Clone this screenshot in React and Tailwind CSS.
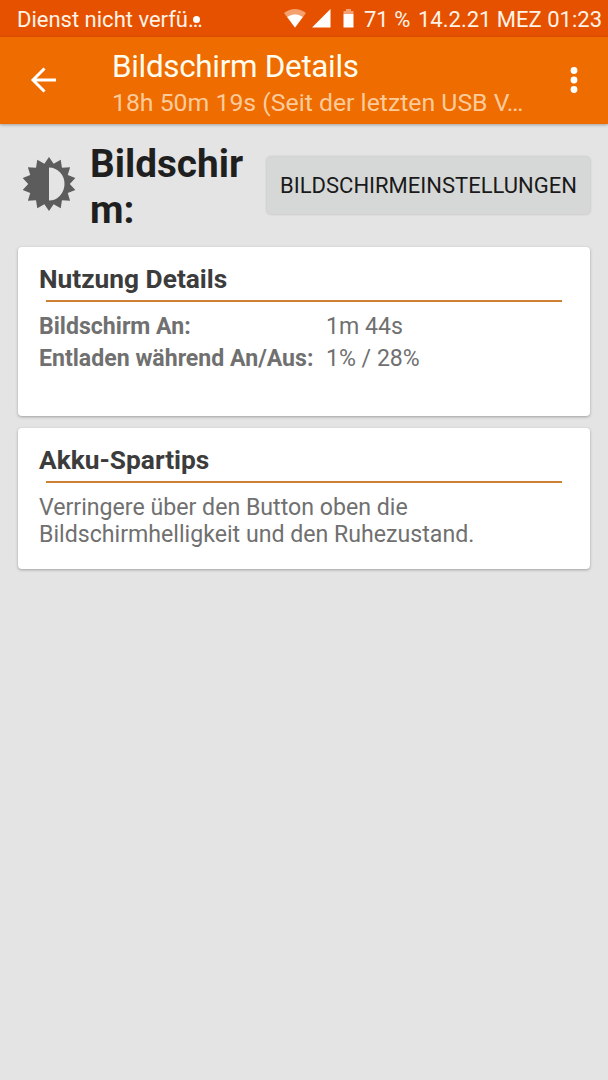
import React from 'react';

const rows = [
  { label: 'Bildschirm An:', value: '1m 44s' },
  { label: 'Entladen während An/Aus:', value: '1% / 28%' },
];

// 14-pointed star around 0,0
const star = Array.from({ length: 28 }, (_, i) => {
  const r = i % 2 ? 20.8 : 27;
  const a = (i * Math.PI) / 14;
  return `${(r * Math.sin(a)).toFixed(2)},${(-r * Math.cos(a)).toFixed(2)}`;
}).join(' L');

function BrightnessIcon() {
  return (
    <svg className="w-[54px] h-[54px] mb-[4px] shrink-0" viewBox="-27 -27 54 54">
      <path d={`M${star} Z M0,-16.5 V16.5 A15.5,16.5 0 0 0 0,-16.5 Z`} fill="#5c5c5c" fillRule="evenodd" />
    </svg>
  );
}

function StatusBar() {
  return (
    <div className="h-[37px] bg-[#e65100] flex items-center pl-[17px] pr-[6px] text-[22px] text-[#fff3e8] whitespace-nowrap">
      <div className="relative w-[267px] pt-[2px]">
        Dienst nicht verfü…
        <span className="absolute left-[176px] top-[15px] w-[7px] h-[7px] rounded-full bg-white" />
      </div>
      <svg className="w-[22px] h-[19px] shrink-0" viewBox="0 0 22 19">
        <path d="M0 4 Q11 -4 22 4 L11 18.5 Z" fill="#f5a06f" />
        <path d="M3.2 8 Q11 2.5 18.8 8 L11 18.5 Z" fill="#fff" />
      </svg>
      <svg className="w-[19px] h-[19px] ml-[6px] shrink-0" viewBox="0 0 19 19">
        <path d="M0 18.5 L18.5 0 V18.5 Z" fill="#fff" />
      </svg>
      <svg className="w-[11px] h-[19px] ml-[12px] shrink-0" viewBox="0 0 11 19">
        <path d="M3 0 H8 V2 H10.5 V5 H0.5 V2 H3 Z" fill="#f5a06f" />
        <path d="M0.5 5 H10.5 V18.5 H0.5 Z" fill="#fff" />
      </svg>
      <span className="ml-[10px] pt-[2px]">71 %</span>
      <span className="ml-auto pt-[2px]">14.2.21 MEZ 01:23</span>
    </div>
  );
}

function AppBar() {
  return (
    <header className="h-[87px] bg-[#ef6c00] flex items-center shadow-[0_1px_3px_rgba(0,0,0,0.3)]">
      <svg className="w-[26px] h-[26px] ml-[30px] mb-px shrink-0" viewBox="0 0 26 26" fill="none" stroke="#fff" strokeWidth="3">
        <path d="M26 13 H3 M14.5 1.5 L3 13 L14.5 24.5" />
      </svg>
      <div className="ml-[56px] w-[420px] pt-[5px] whitespace-nowrap">
        <h1 className="text-[31.4px] leading-[38px] tracking-[-0.3px] text-[#fffdf0]">Bildschirm Details</h1>
        <p className="text-[24.8px] leading-[33px] text-[#fbcb9c]">18h 50m 19s (Seit der letzten USB V…</p>
      </div>
      <svg className="w-[8px] h-[26px] ml-[37.5px] mb-px shrink-0" viewBox="0 0 8 26" fill="#fff">
        <circle cx="4" cy="3.5" r="3.4" />
        <circle cx="4" cy="13" r="3.4" />
        <circle cx="4" cy="22.5" r="3.4" />
      </svg>
    </header>
  );
}

function Card({ title, className, children }) {
  return (
    <section className={`bg-white rounded-[4px] shadow-[0_1px_3px_rgba(0,0,0,0.3)] px-[21px] pt-[16px] text-[#707070] ${className}`}>
      <h2 className="text-[26.3px] leading-[32px] font-bold text-[#3c3c3c]">{title}</h2>
      <div className="h-[2px] bg-[#cd8032] mt-[5px] ml-[7px] mr-[7px]" />
      {children}
    </section>
  );
}

export default function App() {
  return (
    <div className="w-[608px] h-[1080px] bg-[#e4e4e4] font-[Roboto,sans-serif] overflow-hidden">
      <StatusBar />
      <AppBar />
      <main className="px-[18px]">
        <div className="h-[123px] flex items-center pl-[4px]">
          <BrightnessIcon />
          <div className="ml-[14px] w-[160px] pt-[2px] text-[38.7px] leading-[46px] font-bold text-[#1f1f1f] break-all">Bildschirm:</div>
          <button className="ml-auto w-[323px] h-[57px] mb-[1px] rounded-[4px] bg-[#d6d8d7] shadow-[0_0_3px_rgba(0,0,0,0.2)] text-[22px] text-[#1a1a1a] whitespace-nowrap">BILDSCHIRMEINSTELLUNGEN</button>
        </div>
        <Card title="Nutzung Details" className="h-[169px]">
          <div className="grid grid-cols-[287px_1fr] mt-[9px] text-[23.1px] leading-[31.5px]">
            {rows.map((r) => (
              <React.Fragment key={r.label}>
                <span className="font-bold">{r.label}</span>
                <span>{r.value}</span>
              </React.Fragment>
            ))}
          </div>
        </Card>
        <Card title="Akku-Spartips" className="h-[141px] mt-[12px]">
          <p className="mt-[11px] text-[23.15px] leading-[27px]">
            Verringere über den Button oben die<br />
            Bildschirmhelligkeit und den Ruhezustand.
          </p>
        </Card>
      </main>
    </div>
  );
}
